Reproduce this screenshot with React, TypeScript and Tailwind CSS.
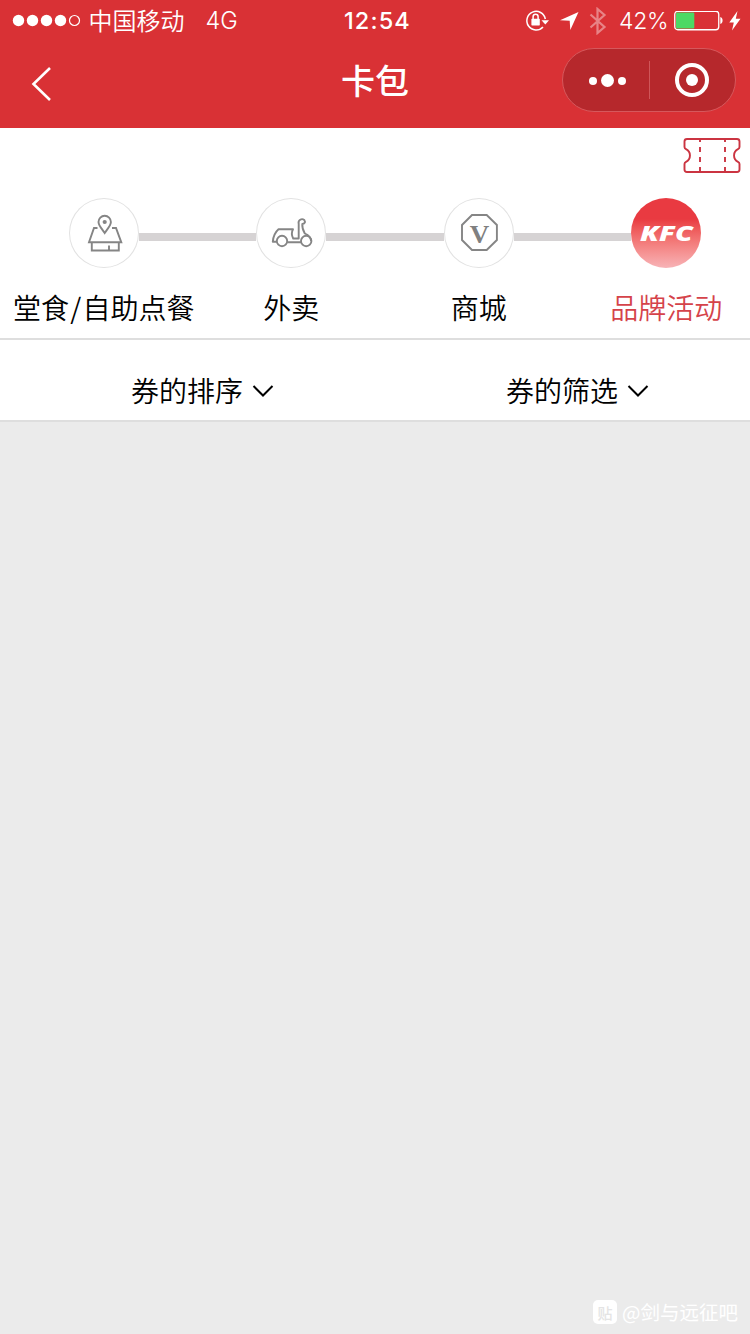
import type { ReactNode } from "react";

const cjk = "font-['Noto_Sans_CJK_SC',sans-serif]";

function StatusBar() {
  return (
    <div className="grid h-10 grid-cols-[344px_1fr_auto] items-center pt-px pr-[9px] text-white">
      <div className="flex items-center pl-3">
        <svg width="70" height="14" viewBox="0 0 70 14" fill="currentColor">
          <circle cx="6.5" cy="6.500" r="5.7" />
          <circle cx="20.5" cy="6.500" r="5.7" />
          <circle cx="34.5" cy="6.500" r="5.7" />
          <circle cx="48.5" cy="6.500" r="5.7" />
          <circle cx="62.5" cy="6.500" r="5" fill="none" stroke="currentColor" strokeWidth="1.2" />
        </svg>
        <span className="ml-[6.500px] pb-px font-['Noto_Sans_CJK_SC',sans-serif] text-2xl leading-[38px] font-[350]">中国移动</span>
        <span className="ml-[21px] font-['Inter',sans-serif] text-[23.5px] leading-[38px] font-light">4G</span>
      </div>
      <span className="font-['Inter',sans-serif] text-[23.5px] leading-[38px] font-medium tracking-[1.1px]">12:54</span>
      <div className="flex items-center">
        <svg width="25" height="24" viewBox="0 0 25 24" fill="none" stroke="currentColor" strokeWidth="1.5">
          <path d="M20.3 10A9.300 9.300 0 1 0 18 18" />
          <path d="M16.500 11.200h7.500l-3.700 4.200z" fill="currentColor" stroke="none" />
          <rect x="6.400" y="9.800" width="8.4" height="6.6" rx="0.6" fill="currentColor" stroke="none" />
          <path d="M8.100 10.300V7.800a2.500 2.500 0 0 1 5 0V10.300" />
        </svg>
        <svg className="ml-[10px]" width="19" height="18" viewBox="0 0 19 18" fill="currentColor">
          <path d="M18.5 0 10.3 18 9.7 8.8 0 8.2z" />
        </svg>
        <svg className="ml-[10px] opacity-40" width="18" height="28" viewBox="0 0 18 28" fill="none" stroke="currentColor" strokeWidth="2.2">
          <path d="M1.5 7.5 15.500 20 8.500 26V2l7 6-14 12.500" />
        </svg>
        <span className="ml-3 w-[55px] font-['Inter',sans-serif] text-[23px] leading-[38px] font-light tracking-[-0.3px]">42%</span>
        <svg width="50" height="20" viewBox="0 0 50 20">
          <rect x="0.75" y="0.25" width="44" height="18.5" rx="3" fill="none" stroke="#fff" strokeWidth="1.3" />
          <rect x="2" y="1.500" width="18.3" height="16" rx="1" fill="#4cd964" />
          <path d="M46.300 6c3 .8 3 6.200 0 7z" fill="#fff" />
        </svg>
        <svg className="ml-[5px]" width="12" height="20" viewBox="0 0 12 20" fill="currentColor">
          <path d="M8.500 0 0.300 11.500h4.500L3 19.500 11.500 7.700H6.800z" />
        </svg>
      </div>
    </div>
  );
}

function NavBar() {
  return (
    <div className="grid h-[88px] grid-cols-[1fr_auto_1fr] items-start text-white">
      <svg className="mt-[26px] ml-[29px]" width="24" height="36" viewBox="0 0 24 36" fill="none" stroke="currentColor" strokeWidth="2.6">
        <path d="M21 2 4.500 18l16.500 16" />
      </svg>
      <h1 className="mt-5 font-['Noto_Sans_CJK_SC',sans-serif] text-[34px] leading-10 font-medium">卡包</h1>
      <div className="mt-2 mr-[14px] flex h-16 w-[174px] items-center justify-self-end rounded-full border border-[#d6585c] bg-[#b6282c]">
        <svg className="ml-[25px]" width="40" height="16" viewBox="0 0 40 16" fill="currentColor">
          <circle cx="5" cy="9" r="4" />
          <circle cx="19.500" cy="8.500" r="6.500" />
          <circle cx="34" cy="9" r="4" />
        </svg>
        <span className="ml-[21px] h-[38px] w-px bg-[#cf5659]" />
        <svg className="ml-[24px]" width="36" height="36" viewBox="0 0 36 36" fill="none">
          <circle cx="18" cy="18" r="15" stroke="#fff" strokeWidth="4" />
          <circle cx="18" cy="18" r="6" fill="#fff" />
        </svg>
      </div>
    </div>
  );
}

function TicketIcon() {
  return (
    <svg width="58" height="37" viewBox="0 0 58 37" fill="none" stroke="#cb3441" strokeWidth="1.900">
      <path d="M4 2H54q2.500 0 2.500 2.500V10q0 1.500-1.500 2.200a7 7 0 0 0 0 12.600q1.500.7 1.500 2.200V32.500q0 2.500-2.500 2.500H4q-2.500 0-2.500-2.500V27q0-1.500 1.500-2.200a7 7 0 0 0 0-12.600Q1.500 11.500 1.500 10V4.500Q1.500 2 4 2z" strokeLinejoin="round" />
      <path d="M17 2v33M42 2v33" strokeDasharray="5 5" strokeDashoffset="2" />
    </svg>
  );
}

function PickupIcon() {
  return (
    <svg width="70" height="70" viewBox="0 0 70 70" fill="none" stroke="#858585" strokeWidth="1.900">
      <path d="M35.700 35c-3-4.500-6.200-7.500-6.200-11a6.200 6.200 0 0 1 12.400 0c0 3.500-3.200 6.500-6.200 11z" />
      <circle cx="35.700" cy="24" r="2.100" fill="#858585" stroke="none" />
      <path d="M28.500 30H25l-5 14.300h32.300L47 30h-4M22.800 44.500v8h27v-8M40 47.500v5" />
    </svg>
  );
}

function ScooterIcon() {
  return (
    <svg width="70" height="70" viewBox="0 0 70 70" fill="none" stroke="#858585" strokeWidth="1.900" strokeLinejoin="round">
      <circle cx="26" cy="43" r="5.200" />
      <circle cx="50.200" cy="43" r="5.200" />
      <path d="M20.800 43.700h-4c.4-5 2.700-9.700 5.700-12.400h14.500c-1.900 3.500-1.500 6 .2 9.200h5.500V26c-1-4 3-6 5.600-4 1.500 2.400.1 3.900-2 4-.3 3.500.8 6.500 2.500 9.500 3.500 1.500 6.200 4 6.200 7.500M31.200 44.200h13.800" />
    </svg>
  );
}

function MallIcon() {
  return (
    <svg width="70" height="70" viewBox="0 0 70 70">
      <path d="M28 17h14.700l10.200 10v15L42.700 52H28L18 42V27z" fill="none" stroke="#858585" strokeWidth="1.900" />
      <text x="35.500" y="44.500" textAnchor="middle" textLength="19.500" lengthAdjust="spacingAndGlyphs" className="fill-[#808080] font-['Liberation_Serif',serif] text-[25px] font-bold">V</text>
    </svg>
  );
}

function KfcLogo() {
  return (
    <svg width="70" height="70" viewBox="0 0 70 70">
      <text x="9" y="42.500" textLength="53" lengthAdjust="spacingAndGlyphs" className="fill-white font-['Open_Sans',sans-serif] text-[20.500px] font-extrabold italic">KFC</text>
    </svg>
  );
}

function Step({ children, active = false }: { children: ReactNode; active?: boolean }) {
  const look = active
    ? "bg-linear-to-b from-[#e93a41] from-30% to-[#f7b3b7]"
    : "bg-white shadow-[inset_0_0_0_1px_#e2e2e2]";
  return <div className={`size-[70px] shrink-0 rounded-full ${look}`}>{children}</div>;
}

function Connector() {
  return <span className="mt-2 h-2 flex-1 bg-[#d6d3d4]" />;
}

function Filter({ label }: { label: string }) {
  return (
    <button className={`flex h-full items-center pt-[19px] pl-[131px] text-[28px] text-black ${cjk}`}>
      <span className="leading-10 font-[350]">{label}</span>
      <svg className="mt-[3px] ml-[9px]" width="22" height="14" viewBox="0 0 22 14" fill="none" stroke="currentColor" strokeWidth="2">
        <path d="M1.500 2 11 11.500 20.500 2" />
      </svg>
    </button>
  );
}

export default function App() {
  return (
    <div className="flex h-[1334px] w-[750px] flex-col overflow-hidden bg-[#ebebeb]">
      <header className="bg-[#d93135]">
        <StatusBar />
        <NavBar />
      </header>
      <section className="h-[212px] border-b-2 border-[#dedede] bg-white">
        <div className="flex h-[70px] items-start justify-end pt-[9px] pr-[9px]">
          <TicketIcon />
        </div>
        <div className="flex items-center pr-[49px] pl-[69px]">
          <Step><PickupIcon /></Step>
          <Connector />
          <Step><ScooterIcon /></Step>
          <Connector />
          <Step><MallIcon /></Step>
          <Connector />
          <Step active><KfcLogo /></Step>
        </div>
        <div className={`mt-[19px] -mr-[10px] ml-[10px] grid grid-cols-4 text-center text-[28px] leading-10 font-[350] text-black ${cjk}`}>
          <span>堂食<span className="mx-[1.2px]">/</span>自助点餐</span>
          <span>外卖</span>
          <span>商城</span>
          <span className="text-[#d5434a]">品牌活动</span>
        </div>
      </section>
      <nav className="grid h-[82px] grid-cols-2 border-b-2 border-[#dedede] bg-white">
        <Filter label="券的排序" />
        <Filter label="券的筛选" />
      </nav>
      <main className="flex-1" />
      <footer className={`flex h-11 items-center justify-end pr-3 text-white ${cjk}`}>
        <span className="flex size-6 items-center justify-center rounded-[5px] bg-white text-[15px] leading-none font-medium text-[#e4e4e4]">贴</span>
        <span className="ml-[5px] text-[19.500px] leading-6">@剑与远征吧</span>
      </footer>
    </div>
  );
}
